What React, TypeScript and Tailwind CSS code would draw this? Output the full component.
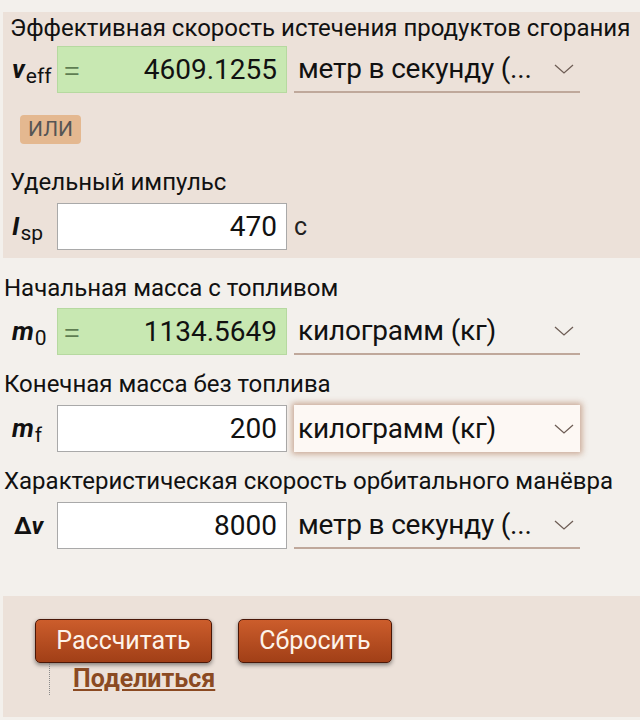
const font = { fontFamily: "Roboto, 'Noto Sans', sans-serif" };

function Chevron() {
  return (
    <svg width="20" height="10" viewBox="0 0 20 10" fill="none" className="shrink-0 mr-[1px]">
      <polyline points="1,1 10,9 19,1" stroke="#6e5d55" strokeWidth="1.3" />
    </svg>
  );
}

function UnitSelect({ text, focused = false }: { text: string; focused?: boolean }) {
  return (
    <div
      className={
        "w-[286px] h-[47px] flex items-center justify-between pl-[4px] pr-[5px] " +
        (focused
          ? "bg-[#fdf8f4] shadow-[0_0_6px_2px_rgba(150,80,40,0.45)]"
          : "border-b-2 border-[#bfa89b]")
      }
    >
      <span className="text-[28px] text-[#111] leading-none tracking-[-0.2px]">{text}</span>
      <Chevron />
    </div>
  );
}

function ValueBox({ value, computed = false }: { value: string; computed?: boolean }) {
  return (
    <div
      className={
        "w-[230px] h-[47px] flex items-center justify-between pl-[5px] pr-[9px] border " +
        (computed ? "bg-[#c8e8b2] border-[#b6d9a0]" : "bg-white border-[#a9a9a9]")
      }
    >
      <span className="text-[32px] font-light text-[#5f7d52] leading-none">{computed ? "=" : ""}</span>
      <span className="text-[28px] text-[#111] leading-none">{value}</span>
    </div>
  );
}

function Symbol({ main, sub }: { main: string; sub?: string }) {
  return (
    <div className="w-[40px] flex items-baseline pl-[2px] text-[#111]">
      <span className="text-[26px] italic font-bold">{main}</span>
      {sub && <span className="text-[21px] relative top-[5px] ml-[1px]">{sub}</span>}
    </div>
  );
}

export default function App() {
  return (
    <div className="w-[640px] h-[720px] bg-[#f3f0ec] overflow-hidden pt-[12px]" style={font}>
      <div className="ml-[3px] bg-[#ece1d9] pl-[7px] pt-[2px] pb-[8px]">
        <div className="text-[24px] leading-[28px] text-[#111] whitespace-nowrap">
          Эффективная скорость истечения продуктов сгорания
        </div>
        <div className="flex items-center gap-[7px] mt-[4px]">
          <Symbol main="v" sub="eff" />
          <ValueBox value="4609.1255" computed />
          <UnitSelect text="метр в секунду (..." />
        </div>
        <div className="mt-[22px] ml-[10px] inline-flex items-center h-[29px] px-[8px] rounded-[4px] bg-[#e4b890] text-[21px] text-[#555]">
          ИЛИ
        </div>
        <div className="mt-[24px] text-[24px] leading-[28px] text-[#111]">Удельный импульс</div>
        <div className="flex items-center gap-[7px] mt-[7px]">
          <Symbol main="I" sub="sp" />
          <ValueBox value="470" />
          <span className="text-[25px] text-[#222]">с</span>
        </div>
      </div>

      <div className="pl-[4px]">
        <div className="mt-[16px] text-[24px] leading-[28px] text-[#111]">Начальная масса с топливом</div>
        <div className="flex items-center gap-[7px] mt-[6px] pl-[6px]">
          <Symbol main="m" sub="0" />
          <ValueBox value="1134.5649" computed />
          <UnitSelect text="килограмм (кг)" />
        </div>
        <div className="mt-[15px] text-[24px] leading-[28px] text-[#111]">Конечная масса без топлива</div>
        <div className="flex items-center gap-[7px] mt-[7px] pl-[6px]">
          <Symbol main="m" sub="f" />
          <ValueBox value="200" />
          <UnitSelect text="килограмм (кг)" focused />
        </div>
        <div className="mt-[15px] text-[24px] leading-[28px] text-[#111] whitespace-nowrap">
          Характеристическая скорость орбитального манёвра
        </div>
        <div className="flex items-center gap-[7px] mt-[7px] pl-[6px]">
          <div className="w-[40px] pl-[4px] text-[24px] font-bold text-[#111]">
            Δ<span className="italic">v</span>
          </div>
          <ValueBox value="8000" />
          <UnitSelect text="метр в секунду (..." />
        </div>
      </div>

      <div className="ml-[3px] mt-[47px] h-[121px] bg-[#ece1d9] pt-[23px] pl-[32px]">
        <div className="flex gap-[26px]">
          <button className="w-[177px] h-[44px] rounded-[5px] border border-[#4a1708] bg-gradient-to-b from-[#cc5d2c] to-[#a13f17] text-[25px] text-[#fdf3ea] shadow-[0_2px_4px_rgba(0,0,0,0.45)]">
            Рассчитать
          </button>
          <button className="w-[154px] h-[44px] rounded-[5px] border border-[#4a1708] bg-gradient-to-b from-[#cc5d2c] to-[#a13f17] text-[25px] text-[#fdf3ea] shadow-[0_2px_4px_rgba(0,0,0,0.45)]">
            Сбросить
          </button>
        </div>
        <div className="flex">
          <div className="ml-[14px] w-0 h-[32px] border-l border-dotted border-[#8a8a8a]" />
          <a className="ml-[23px] mt-[1px] text-[25px] font-bold text-[#8b4a22] underline leading-[30px]">
            Поделиться
          </a>
        </div>
      </div>
    </div>
  );
}
